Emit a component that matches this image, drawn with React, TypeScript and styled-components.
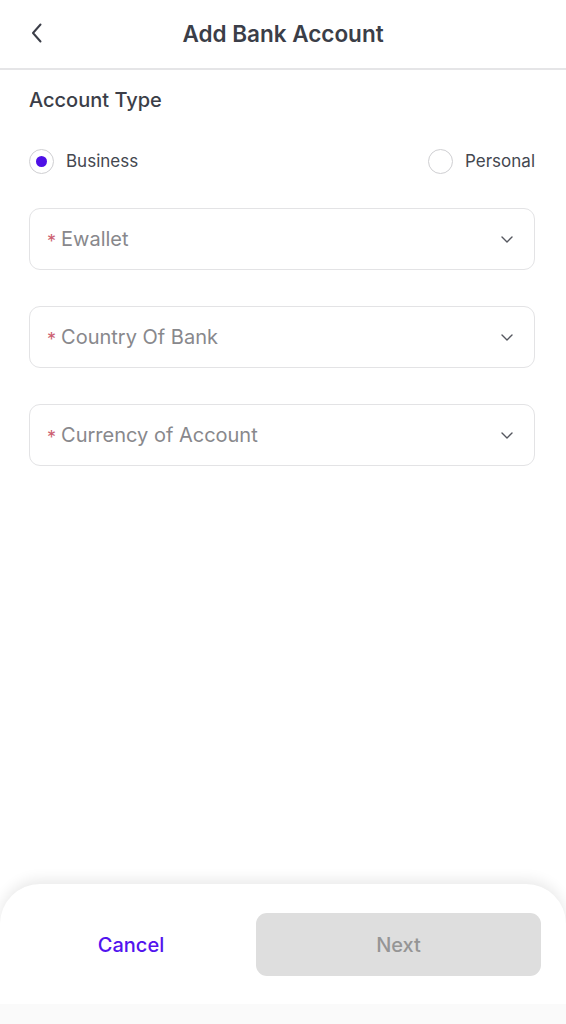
import React from "react";
import styled, { createGlobalStyle } from "styled-components";

const Global = createGlobalStyle`
  html, body { margin: 0; padding: 0; background: #ffffff; }
  body { font-family: Inter, "Noto Sans", "Liberation Sans", sans-serif; -webkit-font-smoothing: antialiased; }
  * { box-sizing: border-box; }
`;

const Page = styled.div`
  width: 566px;
  height: 1024px;
  display: flex;
  flex-direction: column;
  background: #ffffff;
  overflow: hidden;
`;

const Header = styled.header`
  height: 70px;
  flex: none;
  display: grid;
  grid-template-columns: 70px 1fr 70px;
  align-items: center;
  border-bottom: 2px solid #e5e5e7;
`;

const BackButton = styled.button`
  border: 0;
  background: none;
  padding: 0 0 2px 30px;
  height: 100%;
  display: flex;
  align-items: center;
  justify-content: flex-start;
  color: #3b3e48;
  cursor: pointer;
`;

const Title = styled.h1`
  margin: 0;
  text-align: center;
  font-size: 22.5px;
  font-weight: 600;
  color: #3b3e48;
  padding-bottom: 1px;
`;

const Content = styled.main`
  flex: 1;
  padding: 18px 31px 0 29px;
  display: flex;
  flex-direction: column;
`;

const SectionLabel = styled.div`
  font-size: 20px;
  font-weight: 500;
  color: #3b3e48;
  line-height: 24px;
`;

const RadioRow = styled.div`
  display: flex;
  justify-content: space-between;
  align-items: center;
  margin-top: 36px;
  height: 26px;
`;

const RadioOption = styled.label`
  display: flex;
  align-items: center;
  gap: 12px;
  font-size: 17px;
  color: #444750;
  cursor: pointer;
`;

const RadioCircle = styled.span<{ $checked?: boolean }>`
  width: 25px;
  height: 25px;
  border-radius: 50%;
  border: 1.5px solid #cfcfd2;
  display: flex;
  align-items: center;
  justify-content: center;
  &::after {
    content: "";
    width: 11px;
    height: 11px;
    border-radius: 50%;
    background: ${(p) => (p.$checked ? "#4e10e6" : "transparent")};
  }
`;

const Fields = styled.div`
  display: flex;
  flex-direction: column;
  gap: 36px;
  margin-top: 34px;
`;

const SelectField = styled.div`
  height: 62px;
  border: 1.5px solid #e3e3e5;
  border-radius: 11px;
  display: flex;
  align-items: center;
  padding: 0 21px 0 17px;
  cursor: pointer;
`;

const Required = styled.span`
  color: #cc6070;
  font-size: 18px;
  margin-right: 5px;
  position: relative;
  top: 2px;
`;

const Placeholder = styled.span`
  flex: 1;
  font-size: 20px;
  color: #88888c;
`;

const Footer = styled.footer`
  flex: none;
  height: 140px;
  border-radius: 40px 40px 0 0;
  box-shadow: 0 -4px 14px rgba(0, 0, 0, 0.09);
  background: #ffffff;
  display: flex;
  flex-direction: column;
  overflow: hidden;
`;

const FooterRow = styled.div`
  display: flex;
  align-items: center;
  padding: 29px 25px 0 6px;
`;

const CancelButton = styled.button`
  flex: 1;
  border: 0;
  background: none;
  font-family: inherit;
  font-size: 20px;
  font-weight: 500;
  color: #5214ee;
  height: 63px;
  cursor: pointer;
`;

const NextButton = styled.button`
  width: 285px;
  height: 63px;
  border: 0;
  border-radius: 11px;
  background: #dedede;
  color: #959595;
  font-family: inherit;
  font-size: 20px;
  font-weight: 500;
`;

const HomeArea = styled.div`
  margin-top: auto;
  height: 20px;
  background: #fafafa;
`;

const Chevron = ({ dir }: { dir: "left" | "down" }) =>
  dir === "left" ? (
    <svg width="14" height="22" viewBox="0 0 14 22" fill="none">
      <path d="M10.5 2.5 L3 11 L10.5 19.5" stroke="#3b3e48" strokeWidth="2" strokeLinecap="round" strokeLinejoin="round" />
    </svg>
  ) : (
    <svg width="12" height="7" viewBox="0 0 12 7" fill="none">
      <path d="M1 1 L6 6 L11 1" stroke="#55575f" strokeWidth="1.4" strokeLinecap="round" strokeLinejoin="round" />
    </svg>
  );

const fields = ["Ewallet", "Country Of Bank", "Currency of Account"];

export default function App() {
  return (
    <Page>
      <Global />
      <Header>
        <BackButton aria-label="Back">
          <Chevron dir="left" />
        </BackButton>
        <Title>Add Bank Account</Title>
        <span />
      </Header>
      <Content>
        <SectionLabel>Account Type</SectionLabel>
        <RadioRow>
          <RadioOption>
            <RadioCircle $checked />
            Business
          </RadioOption>
          <RadioOption>
            <RadioCircle />
            Personal
          </RadioOption>
        </RadioRow>
        <Fields>
          {fields.map((f) => (
            <SelectField key={f}>
              <Required>*</Required>
              <Placeholder>{f}</Placeholder>
              <Chevron dir="down" />
            </SelectField>
          ))}
        </Fields>
      </Content>
      <Footer>
        <FooterRow>
          <CancelButton>Cancel</CancelButton>
          <NextButton disabled>Next</NextButton>
        </FooterRow>
        <HomeArea />
      </Footer>
    </Page>
  );
}
